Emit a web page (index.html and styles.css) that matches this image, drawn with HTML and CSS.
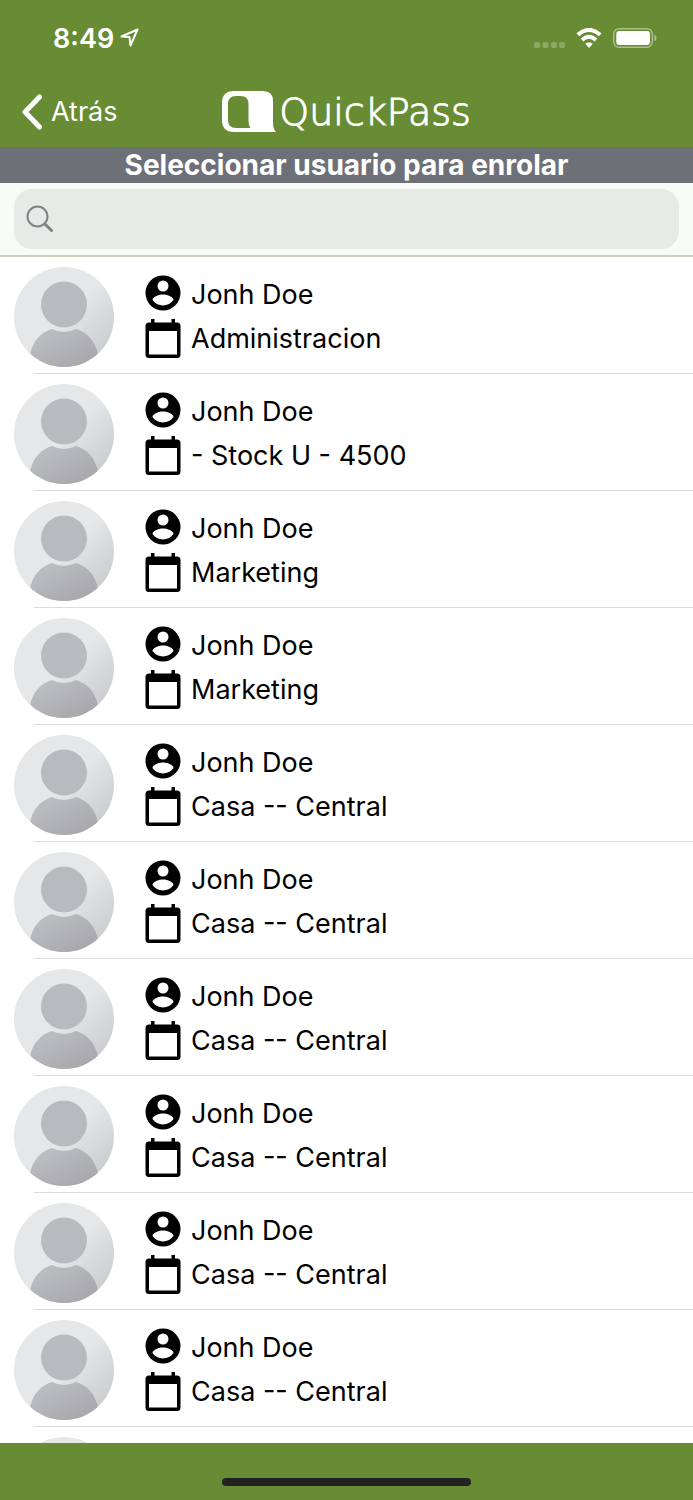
FILE: index.html
```html
<!DOCTYPE html>
<html lang="es">
<head>
    <meta charset="UTF-8">
    <meta name="viewport" content="width=device-width, initial-scale=1.0">
    <title>QuickPass - Seleccionar usuario</title>
    <link rel="stylesheet" href="styles.css">
</head>
<body>
    <!-- Shared icons -->
    <svg class="sprite" aria-hidden="true">
        <defs>
            <linearGradient id="avatar-bg" x1="0" y1="0" x2="1" y2="1">
                <stop offset="0.5" stop-color="#e6e7e9"/>
                <stop offset="1" stop-color="#c2c3c5"/>
            </linearGradient>
            <linearGradient id="avatar-fg" x1="0" y1="0" x2="1" y2="1">
                <stop offset="0.2" stop-color="#bbbcc0"/>
                <stop offset="1" stop-color="#a3a3a8"/>
            </linearGradient>
            <clipPath id="avatar-clip"><circle cx="50" cy="50" r="50"/></clipPath>
        </defs>
        <symbol id="avatar" viewBox="0 0 100 100">
            <g clip-path="url(#avatar-clip)">
                <rect width="100" height="100" fill="url(#avatar-bg)"/>
                <circle cx="50" cy="37.500" r="23" fill="#b9babe"/>
                <path d="M16 88C18 75 27 65 38 62Q44 65 50 65Q56 65 62 62C73 65 82 75 84 88V100H16Z" fill="url(#avatar-fg)"/>
            </g>
        </symbol>
        <symbol id="person" viewBox="0 0 36 44">
            <path fill-rule="evenodd" d="M18 2.5a17.5 17.5 0 1 0 0 35 17.5 17.5 0 0 0 0-35ZM18 7.5a5.5 5.5 0 1 1 0 11 5.5 5.5 0 0 1 0-11ZM18 32.5c-4.400 0-8.200-2.200-10.500-5.500 0-3.500 7-5.500 10.500-5.500s10.500 2 10.500 5.500c-2.300 3.300-6.100 5.500-10.500 5.500Z"/>
        </symbol>
        <symbol id="calendar" viewBox="0 0 36 44">
            <path fill-rule="evenodd" d="M6 2h3.500v3.500h17V2H30v3.500h2q3.500 0 3.500 3.500v28.500q0 3.500-3.500 3.500H4Q.5 41 .5 37.500V9Q.5 5.500 4 5.500h2ZM4 14v23.500h28V14Z"/>
        </symbol>
    </svg>

    <div class="app">
        <header class="header">
            <div class="status-bar">
                <div class="status-time">
                    <span>8:49</span>
                    <svg width="20" height="20" viewBox="0 0 20 20" aria-hidden="true">
                        <path d="M1.500 8.500L17.500 1.500L10.500 17.500L9.500 9Z" fill="none" stroke="#fff" stroke-width="2" stroke-linejoin="round"/>
                    </svg>
                </div>
                <div class="status-icons">
                    <svg class="signal" width="31" height="20" viewBox="0 0 31 20" aria-hidden="true">
                        <rect x="0" y="14" width="6" height="6" rx="2"/>
                        <rect x="8.500" y="14" width="6" height="6" rx="2"/>
                        <rect x="17" y="14" width="6" height="6" rx="2"/>
                        <rect x="25" y="14" width="6" height="6" rx="2"/>
                    </svg>
                    <svg width="26" height="20" viewBox="0 0 26 20" aria-hidden="true">
                        <path d="M1.800 6.800Q13-3 24.200 6.800" fill="none" stroke="#fff" stroke-width="4"/>
                        <path d="M6 12Q13 5.500 20 12" fill="none" stroke="#fff" stroke-width="4"/>
                        <path d="M13 20L9.200 15.800Q13 12.500 16.800 15.800Z" fill="#fff"/>
                    </svg>
                    <svg width="44" height="20" viewBox="0 0 44 20" aria-hidden="true">
                        <rect x="0.700" y="0.700" width="38.600" height="18.600" rx="5.500" fill="none" stroke="#fff" stroke-opacity="0.450" stroke-width="1.400"/>
                        <rect x="3.300" y="3" width="33.700" height="14" rx="3" fill="#fff"/>
                        <path d="M41.300 6.500Q43.500 7.500 43.500 10T41.300 13.500Z" fill="#fff" fill-opacity="0.450"/>
                    </svg>
                </div>
            </div>

            <nav class="nav-bar">
                <a href="#" class="back-link">
                    <svg width="20" height="36" viewBox="0 0 20 36" aria-hidden="true">
                        <path d="M17.500 3L3 18L17.500 33" fill="none" stroke="#fff" stroke-width="5" stroke-linecap="round" stroke-linejoin="round"/>
                    </svg>
                    <span>Atrás</span>
                </a>
                <div class="logo">
                    <svg width="54" height="41" viewBox="0 0 54 41" aria-hidden="true">
                        <path fill="#fff" fill-rule="evenodd" d="M12 0H41Q51 0 51 10V32Q51 38 54 41H12Q0 41 0 29V12Q0 0 12 0ZM14 5Q6 5 6 13V29Q6 37 14 37H28.500Q26.500 34 26.500 30V13Q26.500 5 18.500 5Z"/>
                    </svg>
                    <span class="logo-text">QuickPass</span>
                </div>
            </nav>
        </header>

        <h1 class="page-title">Seleccionar usuario para enrolar</h1>

        <div class="search-bar">
            <label class="search-box">
                <svg width="28" height="28" viewBox="0 0 28 28" aria-hidden="true">
                    <circle cx="11.500" cy="11.500" r="10" fill="none" stroke="#818386" stroke-width="2"/>
                    <path d="M19 19L25.500 25.500" stroke="#818386" stroke-width="3" stroke-linecap="round"/>
                </svg>
                <input type="search" class="search-input" aria-label="Buscar usuario">
            </label>
        </div>

        <ul class="user-list" id="user-list"></ul>

        <footer class="footer">
            <div class="home-indicator"></div>
        </footer>
    </div>

    <script>
        const users = [
            { name: "Jonh Doe", area: "Administracion" },
            { name: "Jonh Doe", area: "- Stock U - 4500" },
            { name: "Jonh Doe", area: "Marketing" },
            { name: "Jonh Doe", area: "Marketing" },
            { name: "Jonh Doe", area: "Casa -- Central" },
            { name: "Jonh Doe", area: "Casa -- Central" },
            { name: "Jonh Doe", area: "Casa -- Central" },
            { name: "Jonh Doe", area: "Casa -- Central" },
            { name: "Jonh Doe", area: "Casa -- Central" },
            { name: "Jonh Doe", area: "Casa -- Central" },
            { name: "Jonh Doe", area: "Casa -- Central" }
        ];

        const userList = document.getElementById("user-list");

        users.forEach(function (user) {
            const item = document.createElement("li");
            item.className = "user-row";
            item.innerHTML = `
                <svg class="avatar"><use href="#avatar"/></svg>
                <div class="user-info">
                    <div class="info-line"><svg class="info-icon"><use href="#person"/></svg><span>${user.name}</span></div>
                    <div class="info-line"><svg class="info-icon"><use href="#calendar"/></svg><span>${user.area}</span></div>
                </div>`;
            userList.appendChild(item);
        });
    </script>
</body>
</html>
```
FILE: styles.css
```css
:root {
    --primary-color: #688c33;
    --title-color: #6e7078;
    --search-bg: #f9fbf6;
    --input-bg: #e8eae7;
}

* {
    margin: 0;
    padding: 0;
    box-sizing: border-box;
}

body {
    background-color: white;
    color: black;
    font-family: Inter, "Liberation Sans", sans-serif;
    font-size: 27px;
}

svg {
    display: block;
    flex-shrink: 0;
}

.sprite {
    position: absolute;
    width: 0;
    height: 0;
}

.app {
    display: flex;
    flex-direction: column;
    height: 100vh;
}

.header {
    background-color: var(--primary-color);
    color: white;
}

.status-bar {
    display: flex;
    justify-content: space-between;
    align-items: center;
    height: 76px;
    padding: 0 36px 0 53px;
}

.status-time {
    display: flex;
    align-items: center;
    gap: 6px;
    font-weight: 600;
}

.status-icons {
    display: flex;
    align-items: center;
    gap: 11px;
}

.signal {
    fill: rgba(255, 255, 255, 0.25);
}

.nav-bar {
    display: grid;
    grid-template-columns: 1fr auto 1fr;
    align-items: center;
    height: 71px;
    padding: 0 22px;
}

.back-link {
    display: flex;
    align-items: center;
    gap: 9px;
    color: white;
    text-decoration: none;
}

.logo {
    display: flex;
    align-items: center;
    gap: 3px;
}

.logo-text {
    font-family: "DejaVu Sans", sans-serif;
    font-size: 38px;
    font-weight: 200;
    line-height: 40px;
    -webkit-text-stroke: 1px white;
}

.page-title {
    background-color: var(--title-color);
    color: white;
    font-size: 28px;
    font-weight: 700;
    line-height: 36px;
    text-align: center;
}

.search-bar {
    padding: 6px 14px;
    background-color: var(--search-bg);
    border-bottom: 2px solid #c9cfb8;
}

.search-box {
    display: flex;
    align-items: center;
    gap: 12px;
    height: 60px;
    padding: 0 12px;
    background-color: var(--input-bg);
    border-radius: 18px;
}

.search-input {
    flex: 1;
    min-width: 0;
    border: none;
    outline: none;
    background: transparent;
    font: inherit;
}

.user-list {
    flex: 1;
    min-height: 0;
    overflow-y: auto;
    scrollbar-width: none;
    list-style: none;
}

/* divider starts further right than the avatar */
.user-row {
    display: flex;
    align-items: center;
    gap: 31px;
    height: 117px;
    margin-left: 34px;
    padding-top: 4px;
    border-bottom: 1px solid #dcdcdc;
}

.avatar {
    width: 100px;
    height: 100px;
    margin-left: -20px;
}

.info-line {
    display: flex;
    align-items: center;
    gap: 10px;
    line-height: 44px;
}

.info-icon {
    width: 36px;
    height: 44px;
}

.footer {
    display: flex;
    justify-content: center;
    align-items: flex-end;
    height: 57px;
    padding-bottom: 14px;
    background-color: var(--primary-color);
}

.home-indicator {
    width: 36%;
    height: 8px;
    border-radius: 4px;
    background-color: #222;
}
```
